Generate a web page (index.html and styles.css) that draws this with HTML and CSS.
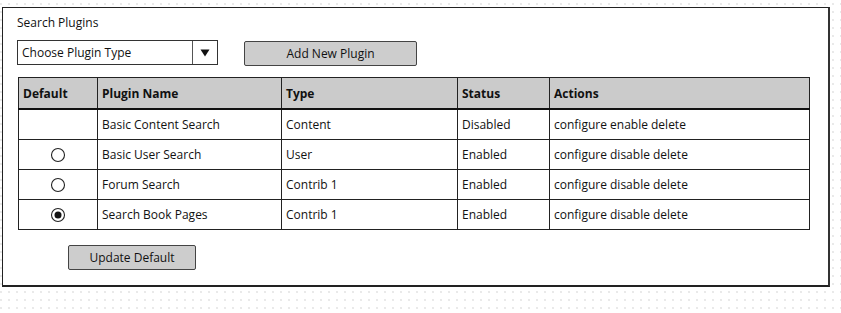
FILE: index.html
```html
<!DOCTYPE html>
<html>
<head>
<meta charset="utf-8">
<link rel="stylesheet" href="styles.css">
</head>
<body>
<div class="frame">
  <div class="title">Search Plugins</div>
  <div class="controls">
    <div class="select">
      <span class="select-label">Choose Plugin Type</span>
      <span class="select-arrow"><svg width="10" height="8" viewBox="0 0 10 8"><path d="M0.5 0.5 H9.5 L5 7.5 Z" fill="#111"/></svg></span>
    </div>
    <div class="btn btn-add">Add New Plugin</div>
  </div>
  <table class="grid">
    <colgroup>
      <col class="c1"><col class="c2"><col class="c3"><col class="c4"><col class="c5">
    </colgroup>
    <thead>
      <tr><th>Default</th><th>Plugin Name</th><th>Type</th><th>Status</th><th>Actions</th></tr>
    </thead>
    <tbody>
      <tr><td class="radio-cell"></td><td>Basic Content Search</td><td>Content</td><td>Disabled</td><td>configure enable delete</td></tr>
      <tr><td class="radio-cell"><svg class="radio" width="16" height="16" viewBox="0 0 16 16"><circle cx="8" cy="8" r="6.5" fill="#fff" stroke="#222" stroke-width="1.1"/></svg></td><td>Basic User Search</td><td>User</td><td>Enabled</td><td>configure disable delete</td></tr>
      <tr><td class="radio-cell"><svg class="radio" width="16" height="16" viewBox="0 0 16 16"><circle cx="8" cy="8" r="6.5" fill="#fff" stroke="#222" stroke-width="1.1"/></svg></td><td>Forum Search</td><td>Contrib 1</td><td>Enabled</td><td>configure disable delete</td></tr>
      <tr><td class="radio-cell"><svg class="radio" width="16" height="16" viewBox="0 0 16 16"><circle cx="8" cy="8" r="6.5" fill="#fff" stroke="#222" stroke-width="1.1"/><circle cx="8" cy="8" r="3.5" fill="#111"/></svg></td><td>Search Book Pages</td><td>Contrib 1</td><td>Enabled</td><td>configure disable delete</td></tr>
    </tbody>
  </table>
  <div class="btn btn-update">Update Default</div>
</div>
</body>
</html>
```
FILE: styles.css
```css
html, body {
  margin: 0;
  padding: 0;
}
body {
  width: 841px;
  height: 313px;
  overflow: hidden;
  background-color: #fff;
  background-image: radial-gradient(circle, #e2e2e2 0.6px, rgba(255,255,255,0) 1px);
  background-size: 8px 8px;
  background-position: 5px 0;
  font-family: "Open Sans", "Noto Sans", sans-serif;
  font-size: 12px;
  color: #111;
}
.frame {
  box-sizing: border-box;
  margin: 7px 0 0 2px;
  width: 828px;
  height: 280px;
  background: #fff;
  border: 1px solid #222;
  border-right-width: 2px;
  border-bottom-width: 2px;
  border-right-color: #333;
  padding: 6px 0 0 14px;
  display: flex;
  flex-direction: column;
  align-items: flex-start;
}
.title {
  line-height: 18px;
  height: 18px;
}
.controls {
  display: flex;
  align-items: flex-start;
  margin-top: 8px;
  gap: 26px;
}
.select {
  box-sizing: border-box;
  width: 201px;
  height: 25px;
  border: 1px solid #333;
  display: flex;
  align-items: stretch;
  background: #fff;
}
.select-label {
  flex: 1;
  padding-left: 4px;
  line-height: 23px;
}
.select-arrow {
  width: 24px;
  border-left: 1px solid #555;
  display: flex;
  align-items: center;
  justify-content: center;
}
.btn {
  box-sizing: border-box;
  height: 25px;
  background: #cdcdcd;
  border: 1px solid #444;
  border-radius: 2px;
  display: flex;
  align-items: center;
  justify-content: center;
  color: #111;
}
.btn-add {
  width: 173px;
  margin-top: 1px;
}
.grid {
  margin-top: 11px;
  margin-left: 1px;
  border-collapse: collapse;
  table-layout: fixed;
  width: 791px;
  border: 1px solid #222;
}
.c1 { width: 79px; }
.c2 { width: 184px; }
.c3 { width: 176px; }
.c4 { width: 92px; }
.c5 { width: 260px; }
.grid th, .grid td {
  border: 1px solid #222;
  text-align: left;
  padding: 0 0 0 4px;
  white-space: nowrap;
}
.grid th {
  background: #cbcbcb;
  font-weight: 700;
  height: 30px;
  border-bottom: 2px solid #111;
}
.grid td {
  height: 29px;
}
.grid td.radio-cell {
  text-align: center;
  padding: 0;
}
.radio {
  display: block;
  margin: 0 auto 0 31px;
}
.btn-update {
  width: 128px;
  margin-top: 15px;
  margin-left: 51px;
}
```
